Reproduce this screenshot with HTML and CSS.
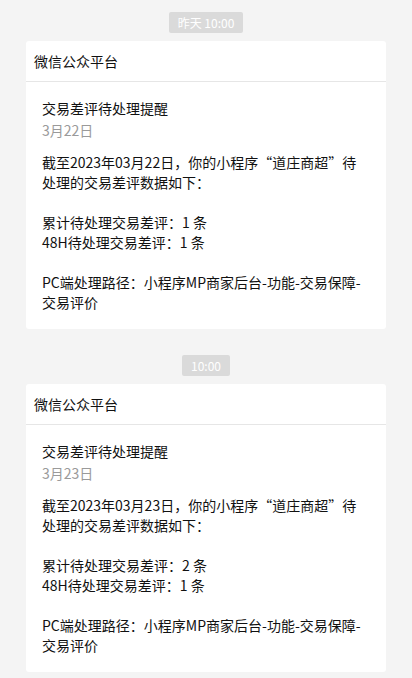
FILE: index.html
```html
<!DOCTYPE html>
<html lang="zh-CN">
<head>
    <meta charset="UTF-8">
    <meta name="viewport" content="width=device-width, initial-scale=1.0">
    <title>微信公众平台</title>
    <link rel="stylesheet" href="styles.css">
</head>
<body>
    <div class="chat">
        <div class="time"><span>昨天 10:00</span></div>
        <div class="card">
            <div class="card-head">微信公众平台</div>
            <div class="card-body">
                <div class="title">交易差评待处理提醒</div>
                <div class="date">3月22日</div>
                <p class="para">截至2023年03月22日，你的小程序“道庄商超”待处理的交易差评数据如下：</p>
                <p class="para">累计待处理交易差评：1 条<br>48H待处理交易差评：1 条</p>
                <p class="para">PC端处理路径：小程序MP商家后台-功能-交易保障-交易评价</p>
            </div>
        </div>

        <div class="time gap"><span>10:00</span></div>
        <div class="card">
            <div class="card-head">微信公众平台</div>
            <div class="card-body">
                <div class="title">交易差评待处理提醒</div>
                <div class="date">3月23日</div>
                <p class="para">截至2023年03月23日，你的小程序“道庄商超”待处理的交易差评数据如下：</p>
                <p class="para">累计待处理交易差评：2 条<br>48H待处理交易差评：1 条</p>
                <p class="para">PC端处理路径：小程序MP商家后台-功能-交易保障-交易评价</p>
            </div>
        </div>
    </div>
</body>
</html>
```

FILE: styles.css
```css
*{
    padding: 0;
    margin: 0;
    box-sizing: border-box;
}
body{
    background: #f4f4f4;
    font-family: "Noto Sans CJK SC", "Microsoft YaHei", sans-serif;
    color: #111;
    min-height: 100vh;
}
.chat{
    display: flex;
    flex-direction: column;
    padding: 12px 26px 6px;
}
.time{
    display: flex;
    justify-content: center;
    margin-bottom: 8px;
}
.time span{
    background: #dadada;
    color: #fff;
    font-size: 12px;
    line-height: 21px;
    height: 21px;
    padding: 0 9px;
    border-radius: 2px;
}
.time.gap{
    margin-top: 26px;
}
.card{
    background: #fff;
    border-radius: 3px;
}
.card-head{
    height: 41px;
    line-height: 40px;
    padding-left: 8px;
    font-size: 14px;
    color: #111;
    border-bottom: 1px solid #e6e6e6;
}
.card-body{
    padding: 16px 16px 17px;
    font-size: 14px;
    line-height: 20px;
}
.title{
    color: #111;
}
.date{
    color: #9a9a9a;
    margin-top: 2px;
    margin-bottom: 12px;
}
.para{
    margin-bottom: 20px;
}
.para:last-child{
    margin-bottom: 0;
}
```
